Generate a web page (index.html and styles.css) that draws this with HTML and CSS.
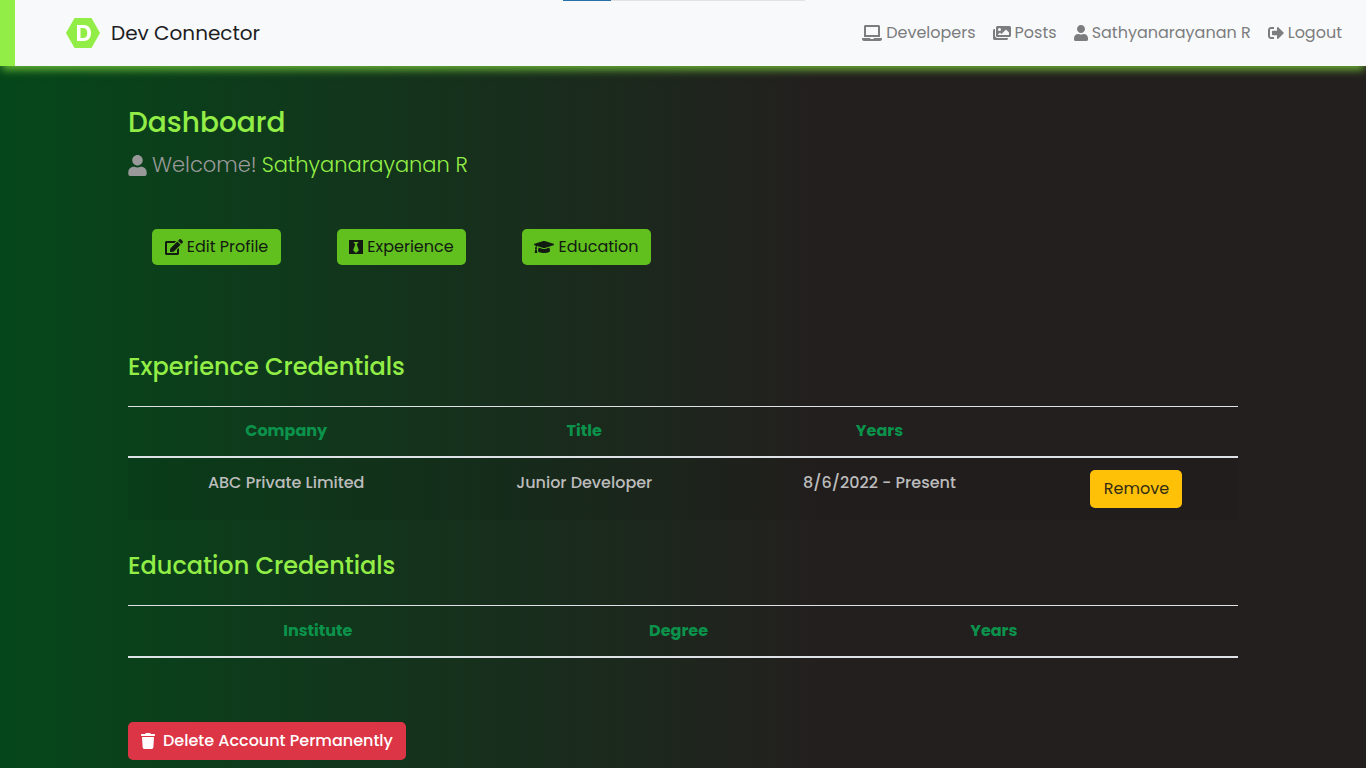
FILE: index.html
```html
<!DOCTYPE html>
<html lang="en">
<head>
<meta charset="utf-8">
<title>Dev Connector</title>
<meta name="viewport" content="width=device-width, initial-scale=1">
<link rel="stylesheet" href="styles.css">
</head>
<body>
<div class="page-progress"><div class="page-progress-value"></div></div>
<header class="navbar">
  <a class="brand" href="#">
    <svg class="brand-logo" viewBox="0 0 34 30" aria-hidden="true"><path fill="#92ee46" d="M8.500 0h17L34 15l-8.500 15h-17L0 15z"/><path fill="#fff" fill-rule="evenodd" d="M11 7h6.500c5 0 7.500 3.500 7.500 8s-2.500 8-7.500 8H11zM14.500 10v10H17c3 0 4.300-2 4.300-5s-1.300-5-4.300-5z"/></svg>
    <span>Dev Connector</span>
  </a>
  <nav class="nav-links">
    <a href="#"><svg class="icon icon-laptop" viewBox="0 0 640 512" aria-hidden="true"><path d="M624 416H381c-1 20-15 32-33 32h-56c-19 0-33-17-33-32H16c-9 0-16 7-16 16v16c0 35 29 64 64 64h512c35 0 64-29 64-64v-16c0-9-7-16-16-16zM576 48c0-26-22-48-48-48H112C86 0 64 22 64 48v336h512zm-64 272H128V64h384z"/></svg> Developers</a>
    <a href="#"><svg class="icon icon-images" viewBox="0 0 576 512" aria-hidden="true"><path fill-rule="evenodd" d="M480 416v16c0 26.500-21.500 48-48 48H48c-26.500 0-48-21.500-48-48V176c0-26.500 21.500-48 48-48h16v208c0 44 36 80 80 80zM144 32h384c26.500 0 48 21.500 48 48v256c0 26.500-21.500 48-48 48H144c-26.500 0-48-21.500-48-48V80c0-26.500 21.500-48 48-48zM208 96a48 48 0 1 0 0 96 48 48 0 0 0 0-96zM160 320h352v-80l-88-88c-4-4-12-4-16 0L272 288l-40-40c-4-4-12-4-16 0l-56 56z"/></svg> Posts</a>
    <a href="#"><svg class="icon icon-user" viewBox="0 0 448 512" aria-hidden="true"><path d="M224 256c70.700 0 128-57.300 128-128S294.700 0 224 0 96 57.300 96 128s57.300 128 128 128zm89.600 32h-16.700a174.100 174.100 0 0 1-145.800 0h-16.700C60.200 288 0 348.200 0 422.400V464c0 26.500 21.500 48 48 48h352c26.500 0 48-21.500 48-48v-41.600c0-74.200-60.200-134.400-134.400-134.400z"/></svg> Sathyanarayanan R</a>
    <a href="#"><svg class="icon icon-logout" viewBox="0 0 512 512" aria-hidden="true"><path d="M497 273L329 441c-15 15-41 4.500-41-17v-96H152c-13.300 0-24-10.700-24-24v-96c0-13.300 10.700-24 24-24h136V88c0-21.400 25.900-32 41-17l168 168c9.300 9.400 9.300 24.600 0 34zM192 436v-40c0-6.600-5.400-12-12-12H96c-17.700 0-32-14.300-32-32V160c0-17.700 14.300-32 32-32h84c6.600 0 12-5.400 12-12V76c0-6.600-5.400-12-12-12H96c-53 0-96 43-96 96v192c0 53 43 96 96 96h84c6.600 0 12-5.400 12-12z"/></svg> Logout</a>
  </nav>
</header>
<main class="dashboard">
  <h1>Dashboard</h1>
  <p class="welcome"><svg class="icon icon-welcome" viewBox="0 0 448 512" aria-hidden="true"><path d="M224 256c70.700 0 128-57.300 128-128S294.700 0 224 0 96 57.300 96 128s57.300 128 128 128zm89.600 32h-16.700a174.100 174.100 0 0 1-145.800 0h-16.700C60.200 288 0 348.200 0 422.400V464c0 26.500 21.500 48 48 48h352c26.500 0 48-21.500 48-48v-41.600c0-74.200-60.200-134.400-134.400-134.400z"/></svg> Welcome! <span class="user-name">Sathyanarayanan R</span></p>
  <div class="actions">
    <button type="button" class="btn btn-action"><svg class="icon icon-edit" viewBox="0 0 576 512" aria-hidden="true"><path d="M402 84l90 90c4 4 4 10 0 14L274 406l-93 10c-12 1-23-9-21-21l10-93L388 84c4-4 10-4 14 0zm162-23l-49-49c-15-15-40-15-55 0l-35 35c-4 4-4 10 0 14l90 90c4 4 10 4 14 0l35-35c15-15 15-40 0-55zM384 346v102H64V128h230c3 0 6-1 8-3l40-40c8-8 2-21-8-21H48C21 64 0 86 0 112v352c0 27 21 48 48 48h352c27 0 48-21 48-48V306c0-11-13-16-21-9l-40 40c-2 3-3 6-3 9z"/></svg> Edit Profile</button>
    <button type="button" class="btn btn-action"><svg class="icon icon-tie" viewBox="0 32 448 448" aria-hidden="true"><path fill-rule="evenodd" d="M0 32v448h448V32zm316 325l-92 88-92-88 66-184-56-77h164l-56 77z"/></svg> Experience</button>
    <button type="button" class="btn btn-action"><svg class="icon icon-cap" viewBox="0 0 640 512" aria-hidden="true"><path d="M622 153L343 67c-15-5-31-5-46 0L18 153c-24 7-24 40 0 47l49 15c-11 13-17 29-18 47-10 5-17 16-17 28 0 11 6 20 14 26L20 429c-2 10 6 19 16 19h56c10 0 18-9 16-19L82 316c8-6 14-15 14-26 0-12-6-22-16-27 1-15 9-28 21-37l196 60c8 3 26 6 46 0l279-86c24-7 24-40 0-47zM353 317c-30 9-55 3-65 0l-145-44-15 111c0 35 86 64 192 64s192-29 192-64l-15-111z"/></svg> Education</button>
  </div>
  <section class="credentials">
    <h2>Experience Credentials</h2>
    <table class="experience-table">
      <thead><tr><th>Company</th><th>Title</th><th>Years</th><td></td></tr></thead>
      <tbody><tr><td>ABC Private Limited</td><td>Junior Developer</td><td>8/6/2022 - Present</td><td><button type="button" class="btn btn-remove">Remove</button></td></tr></tbody>
    </table>
  </section>
  <section class="credentials">
    <h2>Education Credentials</h2>
    <table class="education-table">
      <thead><tr><th>Institute</th><th>Degree</th><th>Years</th><td></td></tr></thead>
    </table>
  </section>
  <button type="button" class="btn btn-delete"><svg class="icon icon-trash" viewBox="0 0 448 512" aria-hidden="true"><path d="M432 32H312l-9-19C298 5 290 0 281 0H167c-9 0-17 5-21 13l-10 19H16C7 32 0 39 0 48v32c0 9 7 16 16 16h416c9 0 16-7 16-16V48c0-9-7-16-16-16zM32 128l21 339c2 25 23 45 48 45h246c25 0 46-20 48-45l21-339z"/></svg> Delete Account Permanently</button>
</main>
</body>
</html>
```
FILE: styles.css
```css
* { box-sizing: border-box; }
body {
  margin: 0;
  min-height: 100vh;
  background: linear-gradient(90deg, #05471a 0%, #231f1e 60%);
  color: #bcbcbc;
  font-family: Poppins, Inter, "Open Sans", sans-serif;
  font-size: 16px;
  line-height: 24px;
}
.page-progress {
  position: absolute;
  top: 0;
  left: 50%;
  width: 242px;
  height: 1px;
  margin-left: -120px;
  background: #e0e2e4;
}
.page-progress-value { width: 20%; height: 100%; background: #2870a8; }
.navbar {
  display: flex;
  align-items: center;
  justify-content: space-between;
  height: 66px;
  padding: 0 24px 0 51px;
  border-left: 15px solid #92ee46;
  background: #f8f9fb;
  box-shadow: 0 6px 8px -2px rgba(127, 216, 62, 0.75);
}
.brand { display: flex; align-items: center; gap: 11px; color: #1d1d1f; font-size: 20px; text-decoration: none; }
.brand-logo { width: 34px; height: 30px; }
.nav-links { display: flex; gap: 17px; }
.nav-links a { display: flex; align-items: center; gap: 4px; color: #7c7d7e; text-decoration: none; white-space: nowrap; }
.icon { flex: none; height: 16px; fill: currentColor; }
.icon-laptop { width: 20px; }
.icon-images { width: 18px; }
.icon-user { width: 14px; }
.icon-logout { width: 16px; }
.dashboard { padding: 41px 128px 8px; }
h1, h2 { margin: 0; color: #92ee46; font-weight: 500; }
h1 { font-size: 28px; line-height: 32px; }
.welcome { display: flex; align-items: center; gap: 5px; margin: 10px 0 48px; color: #999; font-size: 21px; line-height: 32px; font-weight: 300; }
.icon-welcome { width: 19px; height: 21px; }
.user-name { color: #92ee46; }
.actions { display: flex; gap: 56px; margin: 0 24px 84px; }
.btn { display: inline-flex; align-items: center; justify-content: center; border: 0; border-radius: 5px; font: inherit; white-space: nowrap; vertical-align: top; }
.btn-action { gap: 4px; width: 129px; height: 36px; background: #62c01e; color: #111b12; }
.icon-edit { width: 18px; }
.icon-tie { width: 14px; height: 14px; }
.icon-cap { width: 20px; }
.credentials h2 { margin-bottom: 22px; font-size: 24px; line-height: 35px; }
table { width: 100%; border-collapse: collapse; table-layout: fixed; text-align: center; }
th, td { padding: 12px; vertical-align: top; }
thead { border-top: 1px solid #dee2e6; border-bottom: 2px solid #dee2e6; }
th { height: 51px; padding: 13px 12px; color: #0b934c; font-weight: 700; }
tbody { background: rgba(0, 0, 0, 0.05); font-weight: 500; line-height: 26px; }
.experience-table { margin-bottom: 28px; }
.experience-table th { height: 50px; padding: 12px; }
.experience-table th:nth-child(1) { width: 28.5%; }
.experience-table th:nth-child(2) { width: 25.2%; }
.experience-table th:nth-child(3) { width: 28%; }
.education-table { margin-bottom: 64px; }
.education-table th:nth-child(1) { width: 34.2%; }
.education-table th:nth-child(2) { width: 30.8%; }
.education-table th:nth-child(3) { width: 26%; }
.btn-remove { width: 92px; height: 38px; background: #ffc107; color: #322c15; font-weight: 400; }
.btn-delete { gap: 8px; height: 38px; padding: 0 13px; background: #dc3545; color: #fff; font-weight: 500; }
.icon-trash { width: 14px; }
```
